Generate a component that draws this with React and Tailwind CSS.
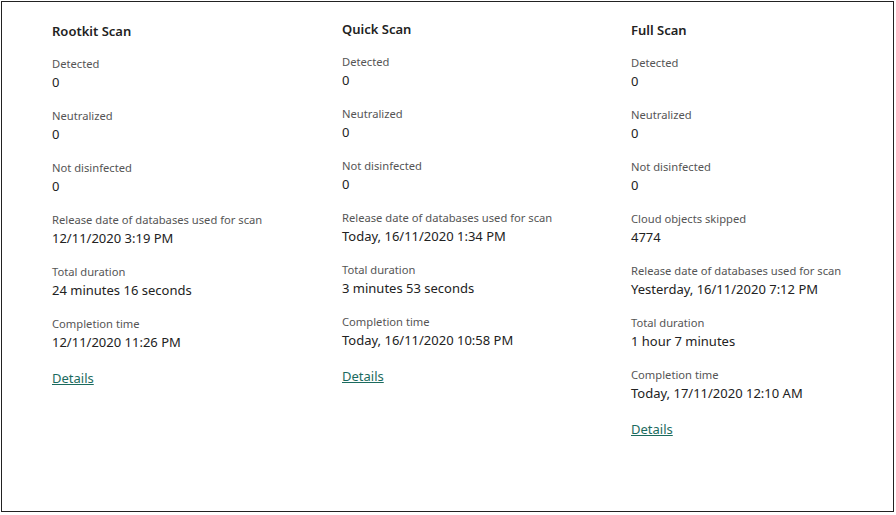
import React from 'react';

const scans = [
  {
    title: 'Rootkit Scan',
    width: 'w-[290px]',
    pad: 'pt-[20px]',
    rows: [
      ['Detected', '0'],
      ['Neutralized', '0'],
      ['Not disinfected', '0'],
      ['Release date of databases used for scan', '12/11/2020 3:19 PM'],
      ['Total duration', '24 minutes 16 seconds'],
      ['Completion time', '12/11/2020 11:26 PM'],
    ],
  },
  {
    title: 'Quick Scan',
    width: 'w-[289px]',
    pad: 'pt-[18px]',
    rows: [
      ['Detected', '0'],
      ['Neutralized', '0'],
      ['Not disinfected', '0'],
      ['Release date of databases used for scan', 'Today, 16/11/2020 1:34 PM'],
      ['Total duration', '3 minutes 53 seconds'],
      ['Completion time', 'Today, 16/11/2020 10:58 PM'],
    ],
  },
  {
    title: 'Full Scan',
    width: 'flex-1',
    pad: 'pt-[19px]',
    rows: [
      ['Detected', '0'],
      ['Neutralized', '0'],
      ['Not disinfected', '0'],
      ['Cloud objects skipped', '4774'],
      ['Release date of databases used for scan', 'Yesterday, 16/11/2020 7:12 PM'],
      ['Total duration', '1 hour 7 minutes'],
      ['Completion time', 'Today, 17/11/2020 12:10 AM'],
    ],
  },
];

const ScanColumn = ({ scan }) => (
  <div className={`${scan.width} shrink-0 flex flex-col ${scan.pad}`}>
    <h2 className="text-[13px] leading-[18px] font-semibold text-[#222]">{scan.title}</h2>
    <div className="mt-[15px] flex flex-col gap-4">
      {scan.rows.map(([label, value]) => (
        <div key={label}>
          <div className="text-[11.2px] leading-[18px] text-[#555]">{label}</div>
          <div className="text-[13px] leading-[18px] text-[#222]">{value}</div>
        </div>
      ))}
    </div>
    <a href="#" className="mt-[18px] self-start text-[13px] leading-[18px] text-[#1b6b5e] underline">
      Details
    </a>
  </div>
);

export default function App() {
  return (
    <div className="w-[896px] h-[515px] bg-white p-px" style={{ fontFamily: '"Noto Sans", "Open Sans", sans-serif' }}>
      <div className="w-[893px] h-[511px] border-[1.5px] border-[#222] flex pl-[50px]">
        {scans.map((s) => (
          <ScanColumn key={s.title} scan={s} />
        ))}
      </div>
    </div>
  );
}
